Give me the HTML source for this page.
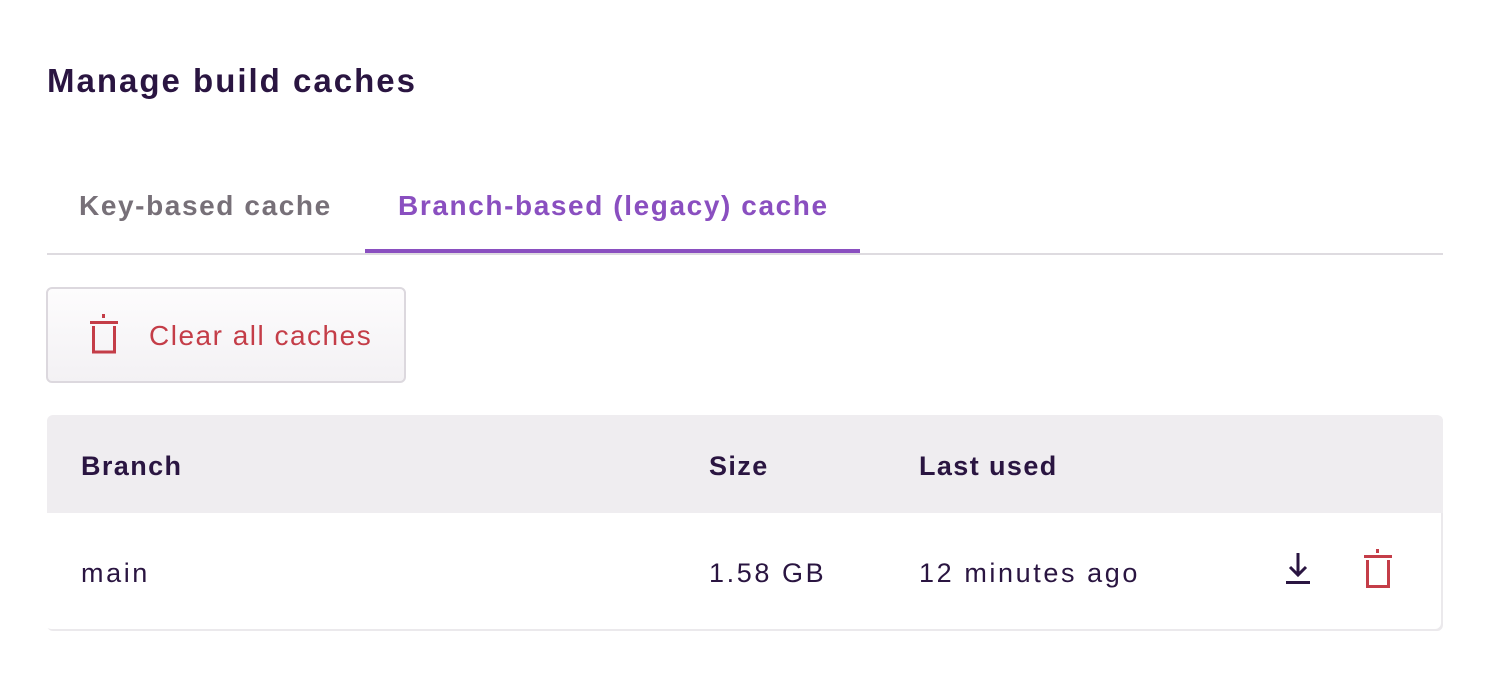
<!DOCTYPE html>
<html><head><style>
body{margin:0;background:#fff;font-family:"Liberation Sans",sans-serif;color:#2a1541;width:1490px;height:680px;position:relative;overflow:hidden}
.a{position:absolute}
h1{position:absolute;left:47px;top:62px;margin:0;font-size:33px;font-weight:bold;color:#2a1541;letter-spacing:2px}
.tab{position:absolute;top:190px;font-size:28px;font-weight:bold;letter-spacing:1.6px}
.h{position:absolute;top:451px;font-size:27px;font-weight:bold;letter-spacing:1.4px}
.b{position:absolute;top:558px;font-size:27px;letter-spacing:2.6px}
</style></head><body>
<h1>Manage build caches</h1>
<div class="tab" style="left:79px;color:#777078">Key-based cache</div>
<div class="tab" style="left:398px;color:#8a4fc0">Branch-based (legacy) cache</div>
<div class="a" style="left:47px;top:253px;width:1396px;height:2px;background:#dedbe0"></div>
<div class="a" style="left:365px;top:249px;width:495px;height:4px;background:#8a4fc0"></div>
<div class="a" style="left:46px;top:287px;width:356px;height:92px;border:2px solid #dcd8de;border-radius:6px;background:linear-gradient(#fdfcfd,#f3f1f4)"></div>
<svg class="a" style="left:86px;top:312px" width="36" height="44" viewBox="0 0 36 44">
<rect x="16" y="2" width="3" height="4" fill="#c43d48"/><rect x="4" y="9" width="28" height="3" fill="#c43d48"/>
<path d="M7.5 14v26h21V14" fill="none" stroke="#c43d48" stroke-width="3"/></svg>
<div class="a" style="left:149px;top:320px;font-size:28px;color:#c43d48;letter-spacing:1.5px">Clear all caches</div>
<div class="a" style="left:47px;top:415px;width:1396px;height:216px;border-radius:6px;box-shadow:inset -2px -2px 0 #ebe9ec"></div>
<div class="a" style="left:47px;top:415px;width:1396px;height:98px;background:#efedf0;border-radius:6px 6px 0 0"></div>
<div class="h" style="left:81px">Branch</div>
<div class="h" style="left:709px">Size</div>
<div class="h" style="left:919px">Last used</div>
<div class="b" style="left:81px">main</div>
<div class="b" style="left:709px">1.58 GB</div>
<div class="b" style="left:919px">12 minutes ago</div>
<svg class="a" style="left:1284px;top:552px" width="30" height="34" viewBox="0 0 30 34">
<path d="M14 1v22M6 15l8 8 8-8" fill="none" stroke="#2a1541" stroke-width="3"/><rect x="2" y="29" width="24" height="3" fill="#2a1541"/></svg>
<svg class="a" style="left:1360px;top:548px" width="36" height="44" viewBox="0 0 36 44">
<rect x="16" y="1" width="3" height="4" fill="#c43d48"/><rect x="4" y="7" width="28" height="3" fill="#c43d48"/>
<path d="M7.5 12v26.5h21V12" fill="none" stroke="#c43d48" stroke-width="3"/></svg>
</body></html>
